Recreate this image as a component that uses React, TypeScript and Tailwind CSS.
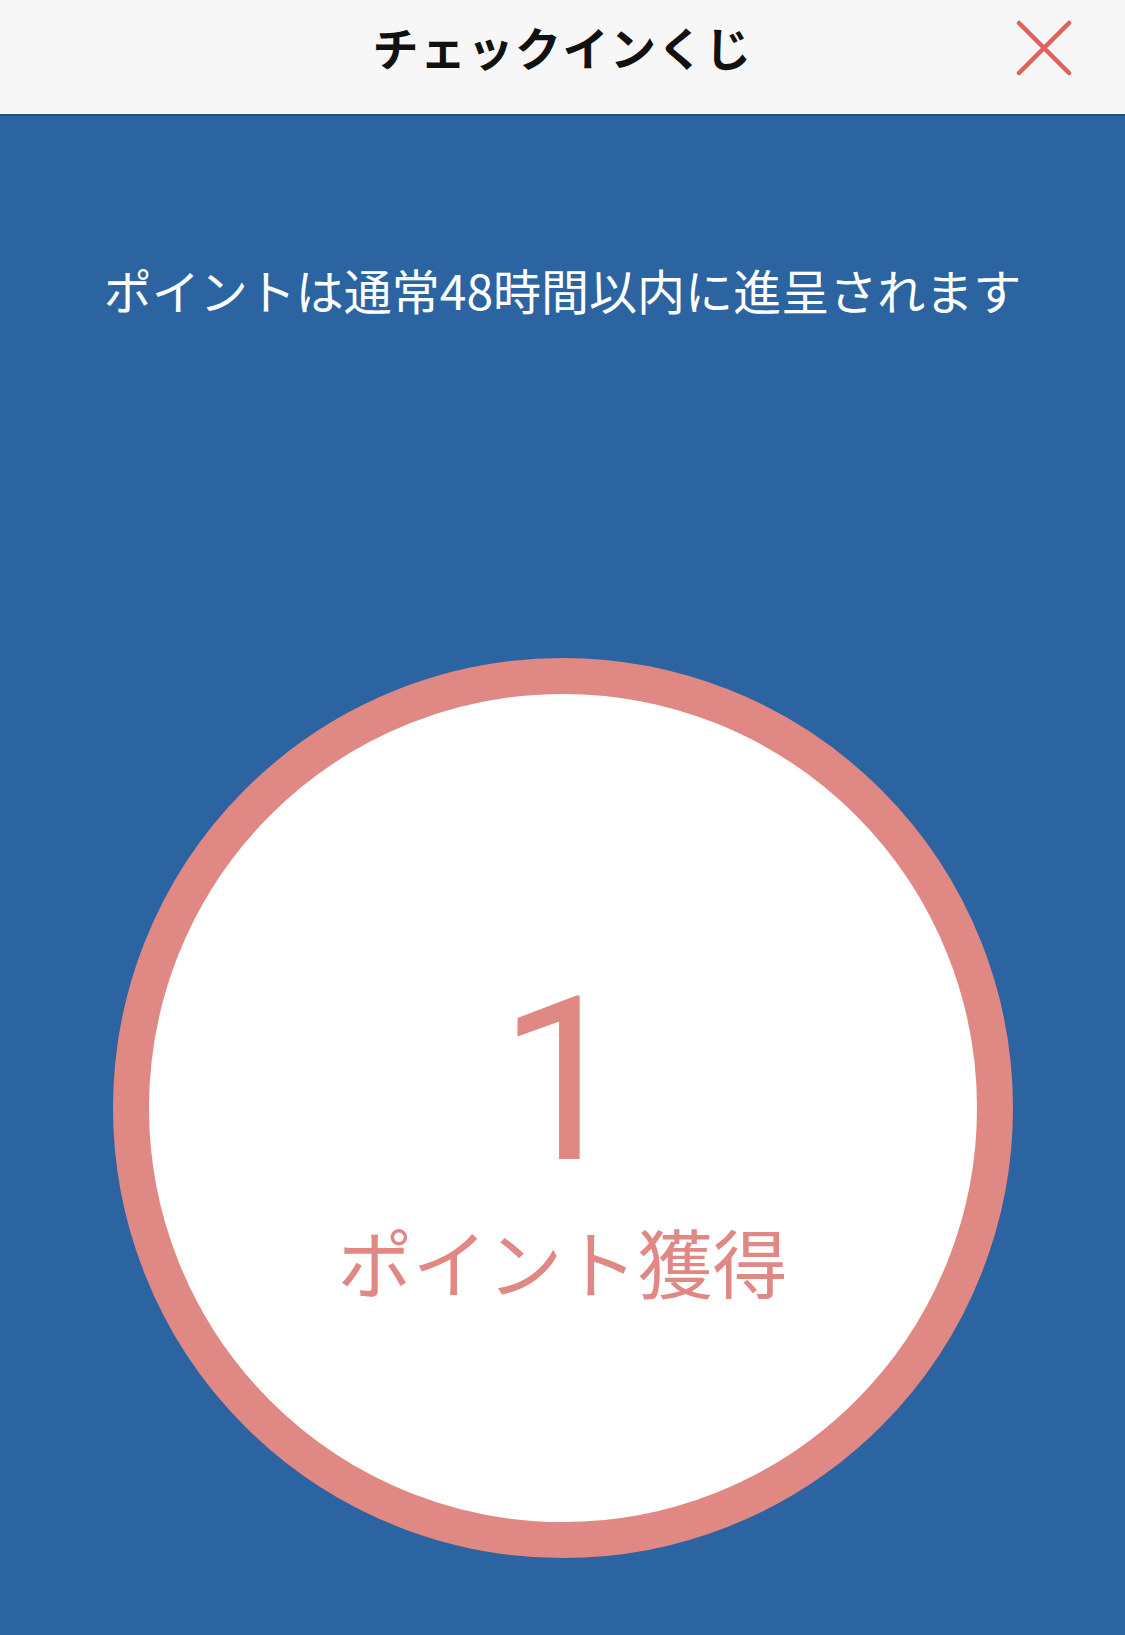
import React from 'react';

const jpFont = { fontFamily: '"Noto Sans CJK JP", "Noto Sans", sans-serif' };

// Close "X" drawn as two rounded strokes
const CloseIcon = () => (
  <svg width="56" height="56" viewBox="0 0 56 56" fill="none">
    <path d="M3 3 L53 53 M53 3 L3 53" stroke="#e0605a" strokeWidth="4.5" strokeLinecap="round" />
  </svg>
);

const App = () => {
  const points = 1;

  return (
    <div className="w-[1125px] min-h-[1635px] flex flex-col bg-[#2c64a1]" style={jpFont}>
      {/* Top bar */}
      <header className="relative h-[116px] flex items-center justify-center pb-[22px] bg-[#f7f7f7] border-b-2 border-[#244f80]">
        <h1 className="text-[46px] font-bold text-[#111] tracking-[1.5px] leading-none">チェックインくじ</h1>
        <button className="absolute right-[53px] top-[20px]" aria-label="close">
          <CloseIcon />
        </button>
      </header>

      {/* Result */}
      <main className="flex-1 flex flex-col items-center">
        <p className="mt-[137px] text-[48px] leading-[1.5] text-white">ポイントは通常48時間以内に進呈されます</p>

        <div className="mt-[333px] w-[900px] h-[900px] rounded-full border-[36px] border-[#e08884] bg-white flex flex-col items-center justify-center pt-[48px]">
          <span className="font-['Roboto',Inter,sans-serif] text-[228px] leading-none text-[#e08884]">
            {points}
          </span>
          <span className="mt-[28px] text-[75px] leading-none text-[#e08884] font-normal">ポイント獲得</span>
        </div>
      </main>
    </div>
  );
};

export default App;
